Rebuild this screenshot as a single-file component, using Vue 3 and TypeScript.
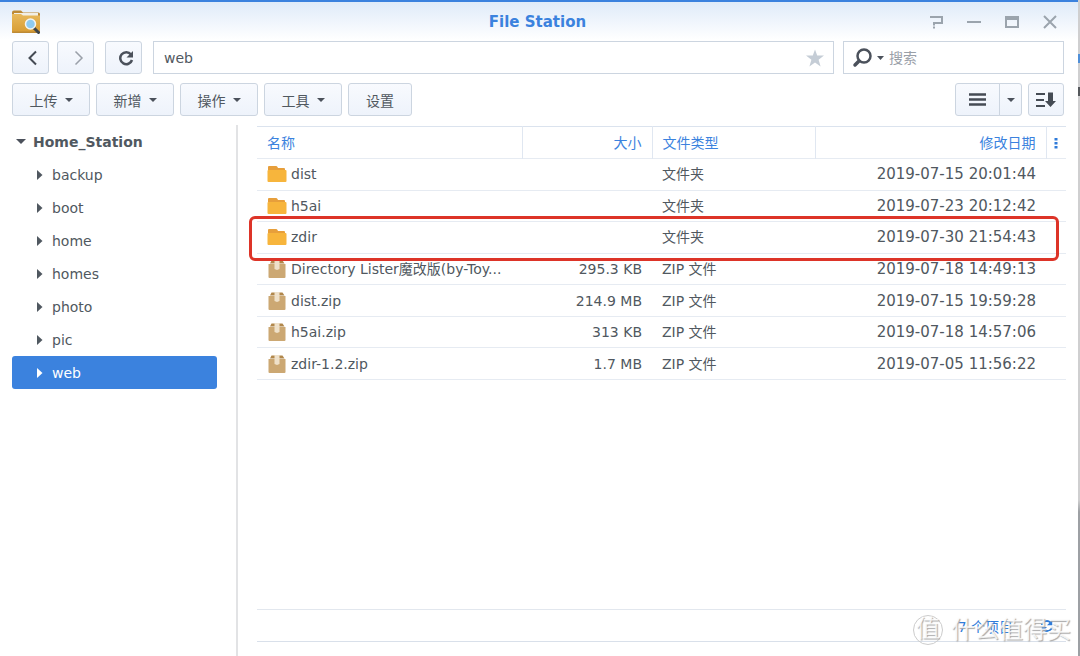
<script setup lang="ts">
import { ref } from 'vue'

interface Entry {
  name: string
  size: string
  type: string
  date: string
  kind: 'folder' | 'zip'
}

const path = ref('web')
const query = ref('')
const selected = ref('web')
const folders: string[] = ['backup', 'boot', 'home', 'homes', 'photo', 'pic', 'web']
const menus: string[] = ['上传', '新增', '操作', '工具']
const entries: Entry[] = [
  { name: 'dist', size: '', type: '文件夹', date: '2019-07-15 20:01:44', kind: 'folder' },
  { name: 'h5ai', size: '', type: '文件夹', date: '2019-07-23 20:12:42', kind: 'folder' },
  { name: 'zdir', size: '', type: '文件夹', date: '2019-07-30 21:54:43', kind: 'folder' },
  { name: 'Directory Lister魔改版(by-Toy...', size: '295.3 KB', type: 'ZIP 文件', date: '2019-07-18 14:49:13', kind: 'zip' },
  { name: 'dist.zip', size: '214.9 MB', type: 'ZIP 文件', date: '2019-07-15 19:59:28', kind: 'zip' },
  { name: 'h5ai.zip', size: '313 KB', type: 'ZIP 文件', date: '2019-07-18 14:57:06', kind: 'zip' },
  { name: 'zdir-1.2.zip', size: '1.7 MB', type: 'ZIP 文件', date: '2019-07-05 11:56:22', kind: 'zip' },
]
</script>

<template>
  <div class="desktop">
    <div class="window">
      <header class="titlebar">
        <svg class="logo" viewBox="0 0 28 24" width="28" height="24">
          <defs>
            <linearGradient id="gold" x1="0" y1="0" x2="0" y2="1">
              <stop offset="0" stop-color="#e8b95c" />
              <stop offset="1" stop-color="#d79c33" />
            </linearGradient>
          </defs>
          <path d="M0 2.5Q0 .5 2 .5h7l2 2h15.500Q28 2.500 28 4v3H0z" fill="#bd8a35" />
          <path d="M2 3h24v4H2z" fill="#f2efe6" />
          <path d="M0 4h9l2 1.500h17V22q0 1-1 1H1q-1 0-1-1z" fill="url(#gold)" />
          <path d="M0 21.500h28V22q0 1-1 1H1q-1 0-1-1z" fill="#bd8a35" />
          <path d="m22 18 4.500 4.500" stroke="#3d444b" stroke-width="3" stroke-linecap="round" />
          <circle cx="18.500" cy="14" r="5" fill="#8ecbf2" stroke="#f4f5f3" stroke-width="1.500" />
        </svg>
        <h1>File Station</h1>
        <div class="controls">
          <button type="button" aria-label="帮助">
            <svg viewBox="0 0 14 14" width="14" height="14"><path d="M1 2h12v6H5v2.500M5 11.500v2" fill="none" stroke="#9ba4ad" stroke-width="2" /></svg>
          </button>
          <button type="button" aria-label="最小化">
            <svg viewBox="0 0 14 14" width="14" height="14"><path d="M0 7h14" stroke="#9ba4ad" stroke-width="2" /></svg>
          </button>
          <button type="button" aria-label="最大化">
            <svg viewBox="0 0 14 14" width="14" height="14"><path d="M0 1h14v12H0zM2 5v6h10V5z" fill="#9ba4ad" fill-rule="evenodd" /></svg>
          </button>
          <button type="button" aria-label="关闭">
            <svg viewBox="0 0 14 14" width="14" height="14"><path d="m1 1 12 12M13 1 1 13" stroke="#9ba4ad" stroke-width="2" /></svg>
          </button>
        </div>
      </header>

      <div class="navbar">
        <button class="btn square" type="button" aria-label="后退">
          <svg viewBox="0 0 16 16" width="16" height="16"><path d="M11 1.500 4.500 8l6.500 6.500" fill="none" stroke="#454b54" stroke-width="2" /></svg>
        </button>
        <button class="btn square" type="button" aria-label="前进">
          <svg viewBox="0 0 16 16" width="16" height="16"><path d="M5.500 1.500 12 8l-6.500 6.500" fill="none" stroke="#9aa0a9" stroke-width="1.500" /></svg>
        </button>
        <button class="btn square reload" type="button" aria-label="刷新">
          <svg viewBox="0 0 16 16" width="16" height="16"><path d="M13 4.500A6 6 0 1 0 14 10" fill="none" stroke="#4b515b" stroke-width="2.500" /><path d="M15 1v6.500H8.500z" fill="#4b515b" /></svg>
        </button>
        <div class="field address">
          <input v-model="path" type="text" aria-label="路径">
          <button class="plain" type="button" aria-label="收藏">
            <svg viewBox="0 0 18 18" width="18" height="18"><path d="m9 .5 2.200 6H18l-5.400 4.200 2 6.800L9 13.500l-5.600 4 2-6.800L0 6.500h6.800z" fill="#c5cdd6" /></svg>
          </button>
        </div>
        <div class="field search">
          <button class="plain" type="button" aria-label="搜索选项">
            <svg viewBox="0 0 32 20" width="32" height="20"><circle cx="12" cy="8" r="6.500" fill="none" stroke="#4b515b" stroke-width="2.500" /><path d="m7 13-4 4" stroke="#4b515b" stroke-width="3.500" stroke-linecap="round" /><path d="M25 8h7l-3.500 4z" fill="#4b515b" /></svg>
          </button>
          <input v-model="query" type="text" placeholder="搜索" aria-label="搜索">
        </div>
      </div>

      <div class="toolbar">
        <button v-for="m in menus" :key="m" class="btn menu" type="button">
          {{ m }}<svg viewBox="0 0 8 4" width="8" height="4"><path d="M0 0h8L4 4z" fill="#4b515b" /></svg>
        </button>
        <button class="btn settings" type="button">设置</button>
        <div class="split">
          <button class="btn view" type="button" aria-label="列表视图">
            <svg viewBox="0 0 17 13" width="17" height="13"><path d="M0 1.500h17M0 6.500h17M0 11.500h17" stroke="#454b54" stroke-width="2.500" /></svg>
          </button>
          <button class="btn arrow" type="button" aria-label="视图选项">
            <svg viewBox="0 0 8 4" width="8" height="4"><path d="M0 0h8L4 4z" fill="#4b515b" /></svg>
          </button>
        </div>
        <button class="btn sort" type="button" aria-label="排序">
          <svg viewBox="0 0 20 16" width="20" height="16"><path d="M0 2h9M0 8h8M0 14h9" stroke="#454b54" stroke-width="2" /><path d="M12 .5h5V9h3l-5.500 6L9 9h3z" fill="#454b54" /></svg>
        </button>
      </div>

      <div class="body">
        <nav class="tree" aria-label="文件夹">
          <button class="node root" type="button">
            <svg viewBox="0 0 10 5" width="10" height="5"><path d="M0 0h10L5 5z" fill="#4b515b" /></svg>Home_Station
          </button>
          <button
            v-for="f in folders" :key="f" type="button"
            :class="['node', 'child', { active: f === selected }]" @click="selected = f"
          >
            <svg viewBox="0 0 6 10" width="6" height="10"><path d="m0 0 5.500 5L0 10z" fill="currentColor" /></svg>{{ f }}
          </button>
        </nav>

        <main class="content">
          <div class="listing">
            <table>
              <colgroup><col class="c-name"><col class="c-size"><col class="c-type"><col><col class="c-more"></colgroup>
              <thead>
                <tr>
                  <th>名称</th><th class="num">大小</th><th>文件类型</th><th class="num">修改日期</th>
                  <th class="more">
                    <button class="plain" type="button" aria-label="选择列">
                      <svg viewBox="0 0 4 12" width="4" height="12"><path d="M.5 1h3v2.500h-3zM.5 5h3v2.500h-3zM.5 9h3v2.500h-3z" fill="#2f7bd9" /></svg>
                    </button>
                  </th>
                </tr>
              </thead>
              <tbody>
                <tr v-for="e in entries" :key="e.name">
                  <td>
                    <div class="name">
                      <svg v-if="e.kind === 'folder'" viewBox="0 0 20 18" width="20" height="18"><path d="M1 4V2q0-1 1-1h7q1 0 1.500 1l.5 1h6q1 0 1 1v1H1z" fill="#e79f3b" /><path d="M1.500 5h17q1 0 1 1v10q0 1-1 1h-17q-1 0-1-1V6q0-1 1-1z" fill="#f7b53c" /></svg>
                      <svg v-else viewBox="0 0 20 18" width="20" height="18"><path d="M3 3.500 4.500.5h11l2 3z" fill="#b1874b" /><path d="M1.500 4h17v13q0 1-1 1h-15q-1 0-1-1z" fill="#cca873" /><path d="M7.500 0h5v9l-2.500 1-2.500-1z" fill="#efe1ca" /></svg>
                      <span>{{ e.name }}</span>
                    </div>
                  </td>
                  <td class="num">{{ e.size }}</td><td>{{ e.type }}</td><td class="num date">{{ e.date }}</td><td></td>
                </tr>
              </tbody>
            </table>
            <div class="highlight"></div>
          </div>
          <footer class="status">
            <span>7 个项目</span>
            <button class="plain" type="button" aria-label="刷新列表">
              <svg viewBox="0 0 16 16" width="14" height="14"><path d="M2 7a6 6 0 0 1 10-3M14 9a6 6 0 0 1-10 3" fill="none" stroke="#2f7bd9" stroke-width="2" /><path d="M14 1v6H8zM2 15V9h6z" fill="#2f7bd9" /></svg>
            </button>
          </footer>
        </main>
      </div>
    </div>
    <div class="watermark"><span class="seal">值</span><span>什么值得买</span></div>
  </div>
</template>

<style>
body { margin: 0; }
</style>

<style scoped>
* { box-sizing: border-box; }
.desktop {
  position: relative;
  min-height: 100vh;
  display: flex;
  padding-right: 2px;
  background: linear-gradient(#cfcfd0 54px, #4f8fd8 54px 63px, #cfcfd0 63px 87px, #55585c 87px 96px, #cfcfd0 96px 500px, #9da0a4 512px);
  color: #505860;
  font-family: "DejaVu Sans", "Noto Sans CJK SC", sans-serif;
  font-size: 14px;
}
.window {
  flex: 1;
  min-width: 0;
  display: flex;
  flex-direction: column;
  border-top: 2px solid #3b82de;
  background: linear-gradient(#dfebf9, #fff 38px);
}
button, input { font: inherit; color: inherit; }
button { cursor: pointer; }
svg { display: block; flex: none; }
.titlebar {
  height: 39px;
  padding: 0 21px 0 12px;
  display: flex;
  align-items: center;
}
h1 { flex: 1; margin: 0; padding-left: 106px; color: #3b82de; font-size: 15px; line-height: 20px; text-align: center; }
.controls { display: flex; gap: 24px; justify-content: flex-end; }
.controls button, .plain { padding: 0; border: 0; background: none; }
.navbar { display: flex; padding: 0 14px 0 12px; }
.btn {
  height: 33px;
  padding: 0;
  display: flex;
  align-items: center;
  justify-content: center;
  border: 1px solid #ccd5e0;
  border-radius: 3px;
  background: linear-gradient(#f8fafe, #eef3fb);
}
.square { width: 37px; margin-right: 8px; padding-left: 4px; }
.square.reload { margin: 0 11px 0 3px; }
.field {
  height: 33px;
  display: flex;
  align-items: center;
  border: 1px solid #ccd5e0;
  background: #fff;
}
.field input {
  flex: 1;
  min-width: 0;
  height: 30px;
  padding: 0;
  border: 0;
  outline: 0;
  background: none;
}
.address { flex: 1; padding: 0 9px 0 10px; }
.search { width: 221px; margin-left: 9px; padding: 0 8px; }
.search input { margin-left: 5px; }
.search input::placeholder { color: #9aa0a8; opacity: 1; }
.toolbar { display: flex; gap: 6px; padding: 9px 14px 9px 12px; }
.menu { width: 78px; gap: 7px; }
.settings { width: 64px; }
.split { display: flex; margin-left: auto; }
.view { width: 45px; border-radius: 3px 0 0 3px; }
.arrow { width: 23px; margin-left: -1px; border-radius: 0 3px 3px 0; }
.sort { width: 36px; }
.body { flex: 1; display: flex; }
.tree {
  width: 238px;
  padding: 0 19px 0 12px;
  border-right: 2px solid #e2e3e5;
}
.node {
  width: 100%;
  height: 33px;
  display: flex;
  align-items: center;
  border: 0;
  border-radius: 3px;
  background: none;
  text-align: left;
}
.root { padding: 0 0 0 4px; gap: 7px; font-weight: bold; }
.child { padding: 0 0 0 25px; gap: 9px; }
.active { background: #3b82de; color: #fff; }
.content {
  flex: 1;
  min-width: 0;
  display: flex;
  flex-direction: column;
  padding: 1px 12px 14px 19px;
}
.listing { position: relative; flex: 1; }
table {
  width: 100%;
  height: 254px;
  table-layout: fixed;
  border-collapse: collapse;
  border-top: 1px solid #dbe3ee;
}
.c-name { width: 265px; }
.c-size { width: 130px; }
.c-type { width: 163px; }
.c-more { width: 20px; }
thead tr { height: 32px; }
tr { border-bottom: 1px solid #e6ebf2; }
th, td { padding: 0 10px; text-align: left; white-space: nowrap; line-height: 20px; }
th { color: #3b82de; font-weight: normal; }
th + th { border-left: 1px solid #e0e7f1; }
.num { text-align: right; }
.date { font-size: 15px; }
.more, td:last-child { padding: 0; }
.more .plain { display: block; margin: 0 auto; }
.name { display: flex; align-items: center; gap: 4px; }
.highlight {
  position: absolute;
  top: 90px;
  left: -8px;
  right: 7px;
  height: 45px;
  border: 3px solid #dd3428;
  border-radius: 6px;
  pointer-events: none;
}
.status {
  height: 33px;
  display: flex;
  align-items: center;
  justify-content: flex-end;
  gap: 27px;
  padding-right: 12px;
  border-top: 1px solid #e2e7ee;
  border-bottom: 1px solid #d9e0ea;
  color: #2f7bd9;
}
.watermark {
  position: absolute;
  right: 9px;
  bottom: 10px;
  display: flex;
  align-items: center;
  gap: 8px;
  color: rgba(255, 255, 255, 0.8);
  font-size: 24px;
  line-height: 32px;
  text-shadow: 1px 1px 1px #a8a8a8;
  pointer-events: none;
}
.seal {
  width: 30px;
  height: 30px;
  line-height: 26px;
  text-align: center;
  border: 1px solid #ccc;
  border-radius: 50%;
}
</style>
